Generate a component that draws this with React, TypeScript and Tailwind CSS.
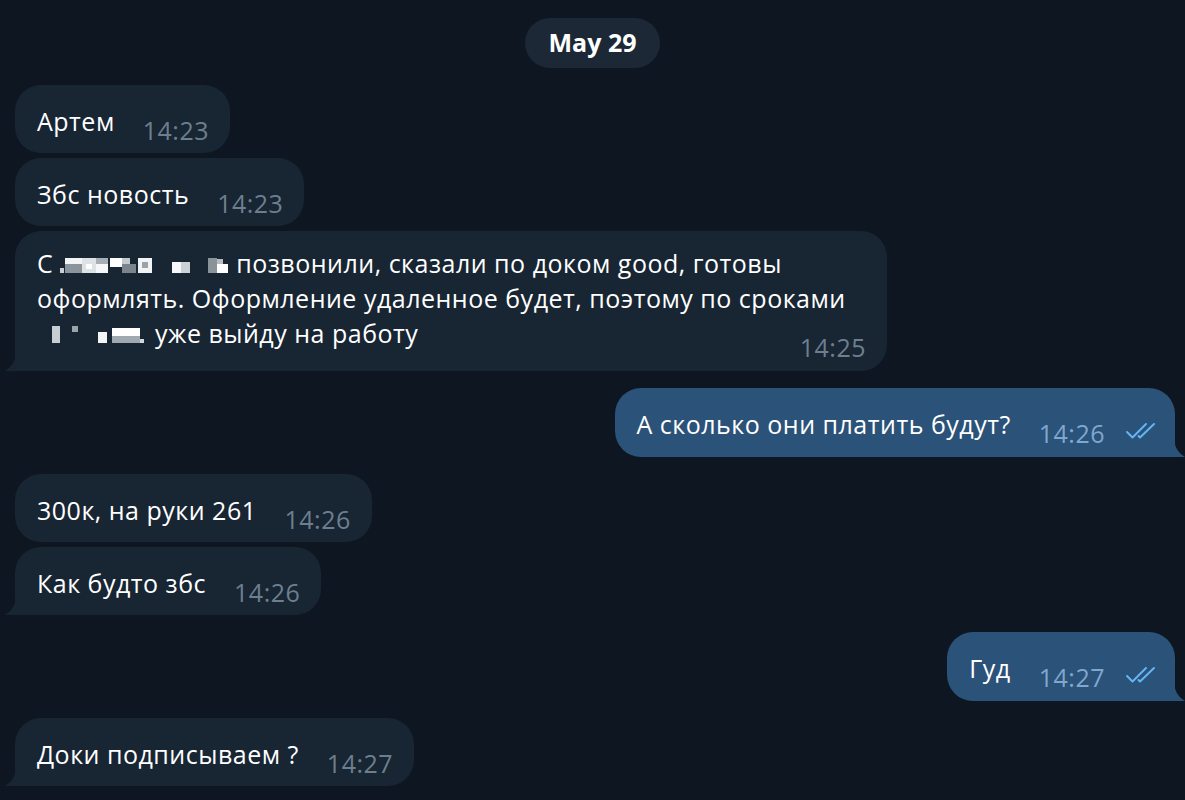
import type { ReactNode } from "react";

type Cell = [number, number, number, number, string];

const mosaicA: Cell[] = [
  [0, 14, 4, 5, "#c9ced3"],
  [5, 4, 17, 6, "#f2f3f4"],
  [5, 10, 17, 9, "#8b939b"],
  [22, 4, 14, 15, "#dfe2e5"],
  [26, 10, 6, 5, "#ffffff"],
  [36, 4, 12, 6, "#a7aeb5"],
  [36, 10, 12, 9, "#f6f7f8"],
  [50, 4, 12, 9, "#ffffff"],
  [62, 10, 14, 9, "#7b848c"],
  [62, 4, 8, 6, "#c3c8cd"],
  [78, 4, 14, 15, "#f1f3f4"],
  [82, 8, 6, 6, "#9aa2aa"],
];

const mosaicB: Cell[] = [
  [0, 8, 9, 11, "#f7f8f9"],
  [9, 8, 9, 11, "#cdd2d7"],
  [36, 4, 9, 15, "#8a929a"],
  [45, 10, 11, 9, "#ffffff"],
  [45, 5, 6, 5, "#b7bdc3"],
];

const mosaicC: Cell[] = [
  [0, 2, 8, 17, "#c9ced3"],
  [20, 2, 6, 6, "#9ba3ab"],
  [46, 8, 9, 11, "#f3f4f5"],
  [60, 4, 28, 8, "#ffffff"],
  [60, 12, 28, 7, "#a1a9b0"],
  [88, 15, 4, 4, "#d3d7db"],
];

function Mosaic({ cells, w }: { cells: Cell[]; w: number }) {
  return (
    <svg width={w} height={20} viewBox={`0 0 ${w} 20`} className="inline-block align-[-1px]">
      {cells.map(([x, y, cw, ch, fill], i) => (
        <rect key={i} x={x} y={y} width={cw} height={ch} fill={fill} />
      ))}
    </svg>
  );
}

function Checks() {
  return (
    <svg width="36" height="18" viewBox="0 0 36 18" fill="none" className="ml-[20px] mb-[11px] shrink-0">
      <path d="M2 10l5.5 5.5L21 2" stroke="#64b5f3" strokeWidth="2" strokeLinecap="round" strokeLinejoin="round" />
      <path d="M13.5 14l1.5 1.5L29 2" stroke="#64b5f3" strokeWidth="2" strokeLinecap="round" strokeLinejoin="round" />
    </svg>
  );
}

function InTail() {
  return (
    <svg width="11" height="20" viewBox="0 0 11 20" className="absolute -left-[10px] bottom-0">
      <path d="M11 0C11 9 7 16 0 20H11Z" fill="#182533" />
    </svg>
  );
}

function OutTail() {
  return (
    <svg width="11" height="20" viewBox="0 0 11 20" className="absolute -right-[10px] bottom-0">
      <path d="M0 0C0 9 4 16 11 20H0Z" fill="#2b5278" />
    </svg>
  );
}

function Incoming({ text, time, tail }: { text: string; time: string; tail?: boolean }) {
  return (
    <div className="flex justify-start">
      <div
        className={`relative flex items-end bg-[#182533] pl-[22px] pr-[21px] pt-[18px] pb-[5px] rounded-[26px] ${tail ? "rounded-bl-none" : ""}`}
      >
        <span className="leading-[36px] mb-[9px] text-white whitespace-nowrap">{text}</span>
        <span className="leading-[36px] ml-[28px] text-[#6d7f8f]">{time}</span>
        {tail && <InTail />}
      </div>
    </div>
  );
}

function Outgoing({ text, time }: { text: string; time: string }) {
  return (
    <div className="flex justify-end pr-[10px]">
      <div className="relative flex items-end bg-[#2b5278] pl-[22px] pr-[14px] pt-[18px] pb-[6px] rounded-[26px] rounded-br-none">
        <span className="leading-[36px] mb-[9px] text-white whitespace-nowrap">{text}</span>
        <span className="leading-[36px] ml-[28px] text-[#7fa7cf]">{time}</span>
        <Checks />
        <OutTail />
      </div>
    </div>
  );
}

function Group({ children }: { children: ReactNode }) {
  return <div className="flex flex-col gap-[5px]">{children}</div>;
}

export default function App() {
  return (
    <div className="w-[1185px] h-[800px] overflow-hidden bg-[#0e1621] font-['Open_Sans',sans-serif] text-[25px] tracking-[0.5px] pl-[15px] pt-[18px]">
      <div className="flex justify-center pr-[15px]">
        <div className="h-[50px] px-[24px] rounded-full bg-[#1c2836] flex items-center text-white font-bold text-[25px] tracking-normal">
          May 29
        </div>
      </div>

      <div className="mt-[17px] flex flex-col gap-[17px]">
        <Group>
          <Incoming text="Артем" time="14:23" />
          <Incoming text="Збс новость" time="14:23" />
          <div className="flex justify-start">
            <div className="relative w-[872px] flex flex-col bg-[#182533] pl-[22px] pr-[21px] pt-[15px] pb-[6px] rounded-[26px] rounded-bl-none">
              <div className="leading-[35px] text-white whitespace-nowrap">
                <div>
                  С <Mosaic cells={mosaicA} w={94} />
                  <span className="inline-block w-[18px]" />
                  <Mosaic cells={mosaicB} w={57} /> позвонили, сказали по доком good, готовы
                </div>
                <div>оформлять. Оформление удаленное будет, поэтому по сроками</div>
                <div>
                  <span className="inline-block w-[15px]" />
                  <Mosaic cells={mosaicC} w={96} /> уже выйду на работу
                </div>
              </div>
              <span className="self-end leading-[36px] -mt-[22px] text-[#6d7f8f]">14:25</span>
              <InTail />
            </div>
          </div>
        </Group>

        <Outgoing text="А сколько они платить будут?" time="14:26" />

        <Group>
          <Incoming text="300к, на руки 261" time="14:26" />
          <Incoming text="Как будто збс" time="14:26" tail />
        </Group>

        <Outgoing text="Гуд" time="14:27" />

        <Incoming text="Доки подписываем ?" time="14:27" tail />
      </div>
    </div>
  );
}
